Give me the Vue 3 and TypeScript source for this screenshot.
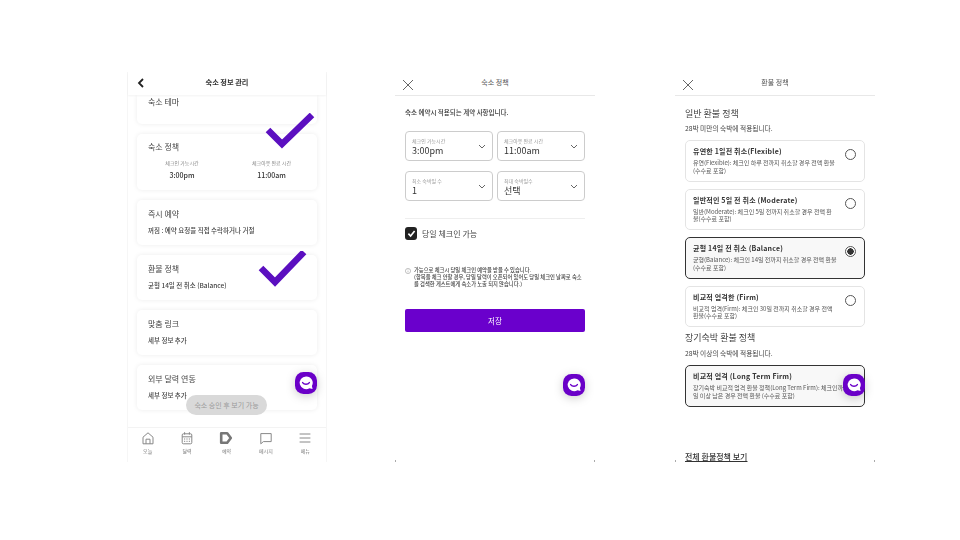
<script setup lang="ts">
interface InfoCard {
  title: string;
  text: string;
}
interface Policy {
  title: string;
  text: string;
  selected?: boolean;
}

const infoCards: InfoCard[] = [
  { title: '즉시 예약', text: '꺼짐 : 예약 요청을 직접 수락하거나 거절' },
  { title: '환불 정책', text: '균형 14일 전 취소 (Balance)' },
  { title: '맞춤 링크', text: '세부 정보 추가' },
  { title: '외부 달력 연동', text: '세부 정보 추가' },
];

const tabs = ['오늘', '달력', '예약', '메시지', '메뉴'];

const selects = [
  { label: '체크인 가능시간', value: '3:00pm' },
  { label: '체크아웃 완료 시간', value: '11:00am' },
  { label: '최소 숙박일 수', value: '1' },
  { label: '최대 숙박일수', value: '선택' },
];

const policies: Policy[] = [
  { title: '유연한 1일전 취소(Flexible)', text: '유연(Flexible): 체크인 하루 전까지 취소할 경우 전액 환불 (수수료 포함)' },
  { title: '일반적인 5일 전 취소 (Moderate)', text: '일반(Moderate): 체크인 5일 전까지 취소할 경우 전액 환불(수수료 포함)' },
  { title: '균형 14일 전 취소 (Balance)', text: '균형(Balance): 체크인 14일 전까지 취소할 경우 전액 환불(수수료 포함)', selected: true },
  { title: '비교적 엄격한 (Firm)', text: '비교적 엄격(Firm): 체크인 30일 전까지 취소할 경우 전액 환불(수수료 포함)' },
];
</script>

<template>
  <div class="page">
    <!-- host info -->
    <section class="phone first">
      <header class="bar">
        <svg class="back" width="8" height="10" viewBox="0 0 8 10"><path d="M6 1 2 5l4 4" fill="none" stroke="#222" stroke-width="1.8" /></svg>
        <b>숙소 정보 관리</b>
      </header>
      <div class="list">
        <div class="card theme"><h3>숙소 테마</h3></div>
        <div class="card times">
          <h3>숙소 정책</h3>
          <div class="time-grid">
            <div><small>체크인 가능시간</small><strong>3:00pm</strong></div>
            <div><small>체크아웃 완료 시간</small><strong>11:00am</strong></div>
          </div>
        </div>
        <div v-for="c in infoCards" :key="c.title" class="card info">
          <h3>{{ c.title }}</h3>
          <p>{{ c.text }}</p>
        </div>
      </div>
      <nav class="tabs">
        <div v-for="(t, i) in tabs" :key="t" class="tab">
          <svg width="14" height="14" viewBox="0 0 14 14" fill="none" stroke="#888" stroke-width="1">
            <template v-if="i === 0">
              <path d="M2 6.2 7 1.8l5 4.4v6.6H2z" />
              <path d="M5 12.8V8.2h4v4.6" />
            </template>
            <template v-else-if="i === 1">
              <rect x="2.2" y="2.8" width="9.6" height="10" rx="1.2" />
              <path d="M2.2 5.8h9.6M4.6 1.2v2.4M9.4 1.2v2.4" />
              <path d="M4 8h6M4 10.3h6" stroke-dasharray="1.2 1.2" />
            </template>
            <template v-else-if="i === 2">
              <path d="M2.2 2.2h6l3.6 4.8-3.6 4.8h-6z" stroke="#777" stroke-width="2.6" stroke-linejoin="round" />
            </template>
            <template v-else-if="i === 3">
              <path d="M1.8 2.6h10.4v8H4.4L1.8 12.8z" />
            </template>
            <template v-else>
              <path d="M1.6 3h10.8M1.6 7h10.8M1.6 11h10.8" />
            </template>
          </svg>
          <span>{{ t }}</span>
        </div>
      </nav>
      <div class="toast">숙소 승인 후 보기 가능</div>
      <svg class="check one" width="52" height="40" viewBox="0 0 52 40"><path d="M3 17 17 31 47 2" fill="none" stroke="#5b0fc0" stroke-width="6.5" /></svg>
      <svg class="check two" width="52" height="40" viewBox="0 0 52 40"><path d="M3 17 17 31 46 1" fill="none" stroke="#5b0fc0" stroke-width="6.5" /></svg>
      <svg class="fab" width="22" height="22" viewBox="0 0 22 22">
        <rect width="22" height="22" rx="8.5" fill="#6a00c8" />
        <path d="M11 4.4a6.4 6.4 0 1 0 3.5 11.8l3.1.8-.7-3.1A6.4 6.4 0 0 0 11 4.4z" fill="#fff" />
        <path d="M7.6 10.6c1.6 2.2 5.2 2.2 6.8 0" fill="none" stroke="#6a00c8" stroke-width="1.4" stroke-linecap="round" />
      </svg>
    </section>

    <!-- house policy form -->
    <section class="phone second">
      <i class="dot tl" /><i class="dot tr" /><i class="dot bl" /><i class="dot br" />
      <header class="bar plain">
        <svg class="close" width="12" height="12" viewBox="0 0 12 12"><path d="M1 1l10 10M11 1 1 11" stroke="#666" stroke-width="1" /></svg>
        <span>숙소 정책</span>
      </header>
      <div class="form">
        <p class="intro">숙소 예약시 적용되는 계약 사항입니다.</p>
        <div class="selects">
          <div v-for="s in selects" :key="s.label" class="select">
            <div>
              <small>{{ s.label }}</small>
              <span>{{ s.value }}</span>
            </div>
            <svg width="8" height="5" viewBox="0 0 8 5"><path d="M1 1l3 3 3-3" fill="none" stroke="#555" stroke-width=".9" /></svg>
          </div>
        </div>
        <hr />
        <label class="same-day">
          <span class="box">
            <svg width="9" height="9" viewBox="0 0 9 9"><path d="M1.4 4.6 3.6 7l4-5" fill="none" stroke="#fff" stroke-width="1.6" /></svg>
          </span>
          당일 체크인 가능
        </label>
        <div class="note">
          <svg width="6" height="6" viewBox="0 0 6 6"><circle cx="3" cy="3" r="2.6" fill="none" stroke="#888" stroke-width=".5" /><path d="M3 2.6v1.8M3 1.4v.6" stroke="#888" stroke-width=".5" /></svg>
          <p>가능으로 체크시 당일 체크인 예약을 받을 수 있습니다.<br />(항목을 체크 안할 경우, 당일 달력이 오픈되어 있어도 당일 체크인 날짜로 숙소를 검색한 게스트에게 숙소가 노출 되지 않습니다.)</p>
        </div>
        <button class="save">저장</button>
      </div>
      <svg class="fab" width="22" height="22" viewBox="0 0 22 22">
        <rect width="22" height="22" rx="8.5" fill="#6a00c8" />
        <path d="M11 4.4a6.4 6.4 0 1 0 3.5 11.8l3.1.8-.7-3.1A6.4 6.4 0 0 0 11 4.4z" fill="#fff" />
        <path d="M7.6 10.6c1.6 2.2 5.2 2.2 6.8 0" fill="none" stroke="#6a00c8" stroke-width="1.4" stroke-linecap="round" />
      </svg>
    </section>

    <!-- refund policy -->
    <section class="phone third">
      <i class="dot tl" /><i class="dot tr" /><i class="dot bl" /><i class="dot br" />
      <header class="bar plain">
        <svg class="close" width="12" height="12" viewBox="0 0 12 12"><path d="M1 1l10 10M11 1 1 11" stroke="#666" stroke-width="1" /></svg>
        <span>환불 정책</span>
      </header>
      <div class="refund">
        <h2>일반 환불 정책</h2>
        <p class="sub">28박 미만의 숙박에 적용됩니다.</p>
        <div class="policies">
          <div v-for="p in policies" :key="p.title" class="policy" :class="{ selected: p.selected }">
            <div class="policy-body">
              <h4>{{ p.title }}</h4>
              <p>{{ p.text }}</p>
            </div>
            <span class="radio" />
          </div>
        </div>
        <h2 class="long">장기숙박 환불 정책</h2>
        <p class="sub">28박 이상의 숙박에 적용됩니다.</p>
        <div class="policy selected wide">
          <div class="policy-body">
            <h4>비교적 엄격 (Long Term Firm)</h4>
            <p>장기숙박 비교적 엄격 환불 정책(Long Term Firm): 체크인까지 30일 이상 남은 경우 전액 환불 (수수료 포함)</p>
          </div>
        </div>
        <a class="all">전체 환불정책 보기</a>
      </div>
      <svg class="fab" width="22" height="22" viewBox="0 0 22 22">
        <rect width="22" height="22" rx="8.5" fill="#6a00c8" />
        <path d="M11 4.4a6.4 6.4 0 1 0 3.5 11.8l3.1.8-.7-3.1A6.4 6.4 0 0 0 11 4.4z" fill="#fff" />
        <path d="M7.6 10.6c1.6 2.2 5.2 2.2 6.8 0" fill="none" stroke="#6a00c8" stroke-width="1.4" stroke-linecap="round" />
      </svg>
    </section>
  </div>
</template>

<style>
html, body {
  background: #fff;
  overflow: hidden;
}
</style>

<style scoped>
.page {
  width: 960px;
  height: 540px;
  box-sizing: border-box;
  padding: 72px 0 0 127px;
  display: flex;
  align-items: flex-start;
  background: #fff;
  font-family: "Noto Sans CJK KR", "Noto Sans", sans-serif;
  color: #333;
}
.phone {
  position: relative;
  width: 200px;
  height: 390px;
  flex: none;
  display: flex;
  flex-direction: column;
  filter: blur(0.5px);
}
.first {
  box-sizing: border-box;
  width: 200px;
  border: solid #f6f6f6;
  border-width: 0 1px;
}
.second { margin-left: 68px; }
.third { margin-left: 80px; }

.bar {
  position: relative;
  box-sizing: border-box;
  height: 23px;
  padding-bottom: 3px;
  flex: none;
  display: flex;
  align-items: center;
  justify-content: center;
  font-size: 7.2px;
  color: #333;
  background: #fff;
  box-shadow: 0 1px 2px rgba(0, 0, 0, 0.05);
  z-index: 1;
}
.bar.plain {
  box-shadow: none;
  border-bottom: 1px solid #e8e8e8;
  color: #555;
  height: 24px;
  font-size: 7px;
}
.back { position: absolute; left: 9px; top: 6px; }
.close { position: absolute; left: 7px; top: 7px; }

.list {
  flex: 1;
  display: flex;
  flex-direction: column;
  gap: 10px;
  padding: 0 9px;
  overflow: hidden;
}
.card {
  flex: none;
  box-sizing: border-box;
  padding: 0 11px;
  background: #fff;
  border-radius: 5px;
  box-shadow: 0 0 5px rgba(0, 0, 0, 0.08);
}
.card h3 {
  margin: 0;
  font-size: 8px;
  line-height: 12px;
  font-weight: 400;
  color: #444;
}
.theme {
  height: 29px;
  padding-top: 1px;
  border-radius: 0 0 5px 5px;
}
.times {
  height: 56px;
  padding-top: 7px;
}
.time-grid {
  margin: 6px -11px 0;
  display: grid;
  grid-template-columns: 90px 89px;
  text-align: center;
}
.time-grid small {
  display: block;
  font-size: 5px;
  line-height: 8px;
  color: #888;
}
.time-grid strong {
  display: block;
  margin-top: 3px;
  font-size: 7px;
  line-height: 10px;
  font-weight: 500;
  color: #333;
}
.info {
  height: 45px;
  padding-top: 8px;
}
.info p {
  margin: 5px 0 0;
  font-size: 6.5px;
  line-height: 10px;
  font-weight: 500;
  color: #444;
}

.tabs {
  height: 34px;
  flex: none;
  display: grid;
  grid-template-columns: repeat(5, 1fr);
  padding-right: 1px;
  border-top: 1px solid #f3f3f3;
  background: #fff;
  z-index: 1;
}
.tab {
  display: flex;
  flex-direction: column;
  align-items: center;
  padding-top: 3px;
  font-size: 5px;
  line-height: 8px;
  color: #777;
}
.tab span { margin-top: 2px; }

.toast {
  position: absolute;
  left: 58px;
  top: 323px;
  width: 81px;
  height: 20px;
  border-radius: 10px;
  background: #d9d9d9;
  color: #999;
  font-size: 7px;
  line-height: 20px;
  text-align: center;
  z-index: 2;
}
.check { position: absolute; z-index: 3; }
.check.one { left: 137px; top: 41px; }
.check.two { left: 130px; top: 179px; }
.fab {
  position: absolute;
  z-index: 4;
  filter: drop-shadow(0 2px 5px rgba(0, 0, 0, 0.2));
}
.first .fab { left: 167px; top: 300px; }
.second .fab { left: 168px; top: 302px; }
.third .fab { left: 168px; top: 302px; }

.dot {
  position: absolute;
  width: 1px;
  height: 2px;
  background: #aaa;
}
.dot.tl { left: 0; top: 0; }
.dot.tr { right: 0; top: 0; }
.dot.bl { left: 0; bottom: 0; }
.dot.br { right: 0; bottom: 0; }

.form {
  padding: 0 10px;
  display: flex;
  flex-direction: column;
}
.intro {
  margin: 11px 0 0;
  font-size: 6.5px;
  line-height: 10px;
  font-weight: 500;
  color: #333;
}
.selects {
  margin-top: 14px;
  display: grid;
  grid-template-columns: 88px 88px;
  column-gap: 4px;
  row-gap: 10px;
}
.select {
  box-sizing: border-box;
  height: 30px;
  padding: 4px 6px 3px;
  display: flex;
  align-items: center;
  justify-content: space-between;
  border: 1px solid #ccc;
  border-radius: 4px;
}
.select div {
  display: flex;
  flex-direction: column;
}
.select small {
  font-size: 5px;
  line-height: 7px;
  margin-bottom: 1px;
  color: #999;
}
.select span {
  font-size: 9px;
  line-height: 12px;
  color: #333;
}
hr {
  margin: 17px 0 0;
  width: 180px;
  border: 0;
  border-top: 1px solid #eee;
}
.same-day {
  margin-top: 8px;
  display: flex;
  align-items: center;
  gap: 5px;
  font-size: 8px;
  line-height: 13px;
  color: #444;
}
.box {
  width: 12px;
  height: 13px;
  border-radius: 3px;
  background: #222;
  display: flex;
  align-items: center;
  justify-content: center;
}
.note {
  margin-top: 27px;
  display: flex;
  gap: 3px;
}
.note svg { margin-top: 1px; flex: none; }
.note p {
  margin: 0;
  width: 168px;
  font-size: 5.3px;
  line-height: 7px;
  font-weight: 500;
  color: #444;
}
.save {
  margin-top: 21px;
  height: 23px;
  padding: 0;
  border: 0;
  border-radius: 2px;
  background: #6a00cc;
  color: #fff;
  font: inherit;
  font-size: 7.5px;
}

.refund {
  padding: 0 10px;
}
.refund h2 {
  margin: 11px 0 0;
  font-size: 9px;
  line-height: 13px;
  font-weight: 400;
  color: #444;
}
.refund h2.long { margin-top: 4px; }
.refund h2.long + .sub { margin-top: 5px; }
.sub {
  margin: 4px 0 0;
  font-size: 6.7px;
  line-height: 9px;
  color: #444;
}
.policies {
  margin-top: 7px;
  display: flex;
  flex-direction: column;
  gap: 7px;
}
.policy {
  box-sizing: border-box;
  width: 180px;
  height: 41.5px;
  padding: 5px 7px;
  display: flex;
  align-items: flex-start;
  justify-content: space-between;
  border: 1.2px solid #e4e4e4;
  border-radius: 5px;
}
.policy.selected {
  border: 1.5px solid #333;
  background: #f8f8f8;
}
.policy.wide { margin-top: 7px; }
.policy-body { width: 144px; }
.wide .policy-body { flex: none; width: 168px; }
.policy h4 {
  margin: 0;
  font-size: 7px;
  line-height: 11px;
  font-weight: 700;
  letter-spacing: 0.2px;
  color: #333;
}
.policy p {
  margin: 2px 0 0;
  font-size: 6px;
  line-height: 7.5px;
  color: #555;
}
.radio {
  flex: none;
  width: 11px;
  height: 11px;
  box-sizing: border-box;
  margin: 3px 1px 0 0;
  border: 1px solid #555;
  border-radius: 50%;
  background: #fff;
}
.selected .radio {
  background: radial-gradient(circle, #333 0 3px, #fff 3.4px);
}
.all {
  display: inline-block;
  margin-top: 44px;
  font-size: 8px;
  line-height: 11px;
  font-weight: 500;
  color: #333;
  text-decoration: underline;
}
</style>
